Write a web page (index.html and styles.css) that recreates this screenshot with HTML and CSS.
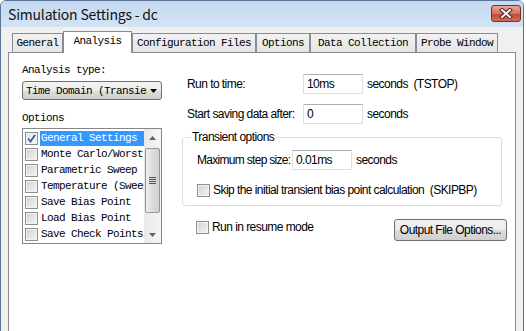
FILE: index.html
```html
<!DOCTYPE html>
<html lang="en">
<head>
  <meta charset="UTF-8">
  <title>Simulation Settings - dc</title>
  <link rel="stylesheet" href="styles.css">
</head>
<body>

  <div class="window">
    <div class="titlebar">
      <span class="title">Simulation Settings - dc</span>
      <span class="close">
        <svg width="14" height="11" viewBox="0 0 14 11">
          <path d="M3 2 L11 9 M11 2 L3 9" stroke="#4a2a24" stroke-width="4" stroke-linecap="square"/>
          <path d="M3 2 L11 9 M11 2 L3 9" stroke="#ffffff" stroke-width="2" stroke-linecap="square"/>
        </svg>
      </span>
    </div>

    <div class="client">
      <div class="tabs">
        <div class="tab tab-general">General</div>
        <div class="tab tab-analysis active">Analysis</div>
        <div class="tab tab-config">Configuration Files</div>
        <div class="tab tab-options">Options</div>
        <div class="tab tab-data">Data Collection</div>
        <div class="tab tab-probe">Probe Window</div>
      </div>

      <div class="panel">
        <div class="left">
          <div class="mono-label">Analysis type:</div>
          <div class="select">
            <span class="select-text">Time Domain (Transient)</span>
            <svg class="select-arrow" width="7" height="4" viewBox="0 0 7 4"><path d="M0 0 H7 L3.5 4 Z" fill="#000"/></svg>
          </div>

          <div class="mono-label options-label">Options</div>
          <div class="listbox">
            <div class="list-items">
              <div class="list-item selected">
                <span class="cb checked">
                  <svg width="11" height="11" viewBox="0 0 11 11"><path d="M2 5.5 L4.5 8.5 L9 2" fill="none" stroke="#3b5aa0" stroke-width="1.8"/></svg>
                </span>
                <span class="item-text">General Settings</span>
              </div>
              <div class="list-item"><span class="cb"></span><span class="item-text">Monte Carlo/Worst Case</span></div>
              <div class="list-item"><span class="cb"></span><span class="item-text">Parametric Sweep</span></div>
              <div class="list-item"><span class="cb"></span><span class="item-text">Temperature (Sweep)</span></div>
              <div class="list-item"><span class="cb"></span><span class="item-text">Save Bias Point</span></div>
              <div class="list-item"><span class="cb"></span><span class="item-text">Load Bias Point</span></div>
              <div class="list-item"><span class="cb"></span><span class="item-text">Save Check Points</span></div>
            </div>
            <div class="scrollbar">
              <div class="sb-btn">
                <svg width="7" height="4" viewBox="0 0 7 4"><path d="M0 4 H7 L3.5 0 Z" fill="#606060"/></svg>
              </div>
              <div class="sb-track">
                <div class="sb-thumb">
                  <span class="grip"></span>
                </div>
              </div>
              <div class="sb-btn">
                <svg width="7" height="4" viewBox="0 0 7 4"><path d="M0 0 H7 L3.5 4 Z" fill="#606060"/></svg>
              </div>
            </div>
          </div>
        </div>

        <div class="right">
          <div class="row">
            <span class="field-label">Run to time:</span>
            <span class="input">10ms</span>
            <span class="unit">seconds&nbsp; (TSTOP)</span>
          </div>
          <div class="row">
            <span class="field-label">Start saving data after:</span>
            <span class="input">0</span>
            <span class="unit">seconds</span>
          </div>

          <div class="group">
            <span class="legend">Transient options</span>
            <div class="row">
              <span class="field-label step-label">Maximum step size:</span>
              <span class="input">0.01ms</span>
              <span class="unit">seconds</span>
            </div>
            <div class="check">
              <span class="cb"></span>
              <span>Skip the initial transient bias point calculation&nbsp; (SKIPBP)</span>
            </div>
          </div>

          <div class="bottom-row">
            <div class="check">
              <span class="cb"></span>
              <span>Run in resume mode</span>
            </div>
            <button class="btn">Output File Options...</button>
          </div>
        </div>
      </div>
    </div>
  </div>

</body>
</html>
```

FILE: styles.css
```css
body {
  margin: 0;
  background: #ffffff;
  overflow: hidden;
}
.window {
  width: 524px;
  height: 340px;
  box-sizing: border-box;
  border: 1px solid #5a7598;
  border-radius: 6px 6px 0 0;
  background: #f0f0f0;
  overflow: hidden;
}
.titlebar {
  height: 26px;
  display: flex;
  align-items: flex-start;
  justify-content: space-between;
  padding-left: 7px;
  background: linear-gradient(#c6d9f0, #d3e3f5);
}
.title {
  font-family: "Noto Sans CJK SC", sans-serif;
  font-size: 14px;
  letter-spacing: -0.2px;
  line-height: 26px;
  color: #111111;
}
.close {
  width: 30px;
  height: 17px;
  box-sizing: border-box;
  margin-top: 4px;
  margin-right: 2px;
  border: 1px solid #7c2d22;
  border-radius: 3px;
  background: linear-gradient(#e9a99a, #d5715e 50%, #c24a35 51%, #d56a52);
  display: flex;
  align-items: center;
  justify-content: center;
}
.client {
  padding: 4px 7px 0 7px;
}
.tabs {
  display: flex;
  align-items: flex-end;
  height: 21px;
  padding-left: 4px;
  position: relative;
  z-index: 1;
}
.tab {
  height: 19px;
  box-sizing: border-box;
  border: 1px solid #898c95;
  border-bottom: none;
  background: linear-gradient(#f2f2f2, #e5e5e5);
  font-family: "Liberation Mono", monospace;
  font-size: 11px;
  letter-spacing: -0.6px;
  line-height: 18px;
  text-align: center;
  color: #000000;
  white-space: nowrap;
}
.tab.active {
  height: 22px;
  margin-bottom: -1px;
  background: #ffffff;
  line-height: 19px;
}
.tab-general { width: 51px; }
.tab-analysis { width: 69px; }
.tab-config { width: 124px; }
.tab-options { width: 54px; }
.tab-data { width: 106px; }
.tab-probe { width: 82px; }
.panel {
  height: 290px;
  border: 1px solid #898c95;
  background: #ffffff;
  display: flex;
  align-items: flex-start;
}
.left {
  width: 140px;
  padding: 10px 0 0 13px;
}
.mono-label {
  font-family: "Liberation Mono", monospace;
  font-size: 11px;
  letter-spacing: -0.6px;
  line-height: 14px;
  color: #000000;
}
.select {
  margin-top: 4px;
  height: 19px;
  box-sizing: border-box;
  border: 1px solid #707070;
  border-radius: 3px;
  background: linear-gradient(#f3f3f3, #ebebeb 50%, #dddddd 51%, #cfcfcf);
  display: flex;
  align-items: center;
  padding: 0 4px 0 3px;
}
.select-text {
  flex: 1;
  overflow: hidden;
  white-space: nowrap;
  font-family: "Liberation Mono", monospace;
  font-size: 11px;
  letter-spacing: -0.6px;
  color: #000000;
}
.select-arrow {
  margin-left: 3px;
}
.options-label {
  margin-top: 11px;
}
.listbox {
  margin-top: 3px;
  height: 116px;
  box-sizing: border-box;
  border: 1px solid #828790;
  display: flex;
}
.list-items {
  flex: 1;
  overflow: hidden;
  padding: 1px 0 0 2px;
}
.list-item {
  height: 16px;
  display: flex;
  align-items: center;
}
.item-text {
  margin-left: 2px;
  padding: 0 1px;
  line-height: 15px;
  white-space: nowrap;
  font-family: "Liberation Mono", monospace;
  font-size: 11px;
  letter-spacing: -0.6px;
  color: #000000;
}
.list-item.selected .item-text {
  flex: 1;
  background: #3399ff;
  color: #ffffff;
}
.cb {
  width: 13px;
  height: 13px;
  flex: none;
  box-sizing: border-box;
  border: 1px solid #8e8f8f;
  background: linear-gradient(135deg, #cfd1d4, #f4f4f4);
  box-shadow: inset 0 0 0 1px #f2f2f2;
  display: flex;
  align-items: center;
  justify-content: center;
}
.cb.checked {
  background: linear-gradient(135deg, #dfe3e8, #f7f7f7);
}
.scrollbar {
  width: 17px;
  display: flex;
  flex-direction: column;
  background: linear-gradient(90deg, #e8e8e8, #f5f5f5);
}
.sb-btn {
  height: 17px;
  display: flex;
  align-items: center;
  justify-content: center;
}
.sb-track {
  flex: 1;
  padding-top: 2px;
}
.sb-thumb {
  margin: 0 1px;
  height: 65px;
  box-sizing: border-box;
  border: 1px solid #979797;
  border-radius: 2px;
  background: linear-gradient(90deg, #eeeeee, #dcdcdc 50%, #cfcfcf);
  display: flex;
  align-items: center;
  justify-content: center;
}
.grip {
  width: 7px;
  height: 7px;
  background: repeating-linear-gradient(#555555 0 1px, transparent 1px 2px);
}
.right {
  padding: 21px 0 0 25px;
  font-family: "Liberation Sans", sans-serif;
  font-size: 12px;
  letter-spacing: -0.55px;
  color: #000000;
  white-space: nowrap;
}
.row {
  display: flex;
  align-items: center;
  height: 20px;
  margin-bottom: 10px;
}
.field-label {
  width: 116px;
}
.step-label {
  width: 95px;
  letter-spacing: -0.7px;
}
.input {
  width: 60px;
  height: 20px;
  box-sizing: border-box;
  border: 1px solid #dbdfe6;
  border-top-color: #abadb3;
  padding-left: 3px;
  line-height: 18px;
  background: #ffffff;
}
.unit {
  margin-left: 4px;
}
.group {
  position: relative;
  margin: 13px 0 0 -5px;
  width: 320px;
  height: 69px;
  box-sizing: border-box;
  border: 1px solid #d5dfe5;
  border-radius: 3px;
  padding: 12px 0 0 14px;
}
.legend {
  position: absolute;
  left: 8px;
  top: -8px;
  padding: 0 1px;
  line-height: 14px;
  background: #ffffff;
}
.group .row {
  margin-bottom: 13px;
}
.check {
  display: flex;
  align-items: center;
  gap: 3px;
}
.bottom-row {
  margin-top: 13px;
  display: flex;
  align-items: flex-start;
  justify-content: space-between;
  width: 311px;
  padding-left: 9px;
}
.bottom-row .check {
  margin-top: 1px;
}
.btn {
  width: 113px;
  height: 22px;
  border: 1px solid #707070;
  border-radius: 3px;
  background: linear-gradient(#f2f2f2, #ebebeb 50%, #dddddd 51%, #cfcfcf);
  font-family: "Liberation Sans", sans-serif;
  font-size: 12px;
  letter-spacing: -0.55px;
  color: #000000;
  padding: 0;
  white-space: nowrap;
}
```
